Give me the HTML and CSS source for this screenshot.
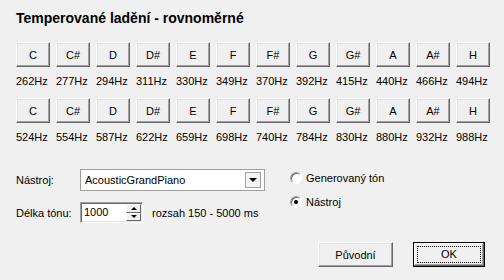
FILE: index.html
```html
<!DOCTYPE html>
<html lang="cs">

<head>
    <meta charset="UTF-8">
    <title>Temperované ladění</title>
    <link rel="stylesheet" href="styles.css">
</head>

<body>
    <div class="dialog">
        <h1 class="title">Temperované ladění - rovnoměrné</h1>

        <!-- 1. oktáva -->
        <div class="keys">
            <div class="key"><button class="btn">C</button><span>262Hz</span></div>
            <div class="key"><button class="btn">C#</button><span>277Hz</span></div>
            <div class="key"><button class="btn">D</button><span>294Hz</span></div>
            <div class="key"><button class="btn">D#</button><span>311Hz</span></div>
            <div class="key"><button class="btn">E</button><span>330Hz</span></div>
            <div class="key"><button class="btn">F</button><span>349Hz</span></div>
            <div class="key"><button class="btn">F#</button><span>370Hz</span></div>
            <div class="key"><button class="btn">G</button><span>392Hz</span></div>
            <div class="key"><button class="btn">G#</button><span>415Hz</span></div>
            <div class="key"><button class="btn">A</button><span>440Hz</span></div>
            <div class="key"><button class="btn">A#</button><span>466Hz</span></div>
            <div class="key"><button class="btn">H</button><span>494Hz</span></div>
        </div>

        <!-- 2. oktáva -->
        <div class="keys">
            <div class="key"><button class="btn">C</button><span>524Hz</span></div>
            <div class="key"><button class="btn">C#</button><span>554Hz</span></div>
            <div class="key"><button class="btn">D</button><span>587Hz</span></div>
            <div class="key"><button class="btn">D#</button><span>622Hz</span></div>
            <div class="key"><button class="btn">E</button><span>659Hz</span></div>
            <div class="key"><button class="btn">F</button><span>698Hz</span></div>
            <div class="key"><button class="btn">F#</button><span>740Hz</span></div>
            <div class="key"><button class="btn">G</button><span>784Hz</span></div>
            <div class="key"><button class="btn">G#</button><span>830Hz</span></div>
            <div class="key"><button class="btn">A</button><span>880Hz</span></div>
            <div class="key"><button class="btn">A#</button><span>932Hz</span></div>
            <div class="key"><button class="btn">H</button><span>988Hz</span></div>
        </div>

        <div class="settings">
            <div class="form">
                <div class="row">
                    <label class="lbl">Nástroj:</label>
                    <div class="combo">
                        <span class="combo-text">AcousticGrandPiano</span>
                        <span class="combo-btn"><i class="arrow-down"></i></span>
                    </div>
                </div>
                <div class="row row-spin">
                    <label class="lbl">Délka tónu:</label>
                    <div class="spin">
                        <span class="spin-text">1000</span>
                        <span class="spin-btns">
                            <span class="spin-btn"><i class="arrow-up"></i></span>
                            <span class="spin-btn"><i class="arrow-down small"></i></span>
                        </span>
                    </div>
                    <span class="hint">rozsah 150 - 5000 ms</span>
                </div>
            </div>
            <div class="radios">
                <div class="radio"><span class="circle"></span>Generovaný tón</div>
                <div class="radio"><span class="circle checked"></span>Nástroj</div>
            </div>
        </div>

        <div class="footer">
            <button class="btn btn-wide">Původní</button>
            <button class="btn btn-ok"><span class="focus">OK</span></button>
        </div>
    </div>
</body>

</html>
```

FILE: styles.css
```css
* {
    margin: 0;
    padding: 0;
    box-sizing: border-box;
}

body {
    background-color: #f0f0f0;
    font-family: "Liberation Sans", Arial, sans-serif;
    font-size: 11px;
    color: #000;
}

.dialog {
    width: 504px;
    height: 280px;
    padding: 10px 16px 0;
}

.title {
    font-size: 14px;
    font-weight: bold;
    line-height: 16px;
    height: 16px;
}

/* tlačítka tónů */
.keys {
    display: flex;
    gap: 6px;
    margin-top: 16px;
}

.keys + .keys {
    margin-top: 10px;
}

.key {
    display: flex;
    flex-direction: column;
    width: 34px;
}

.key span {
    margin-top: 7px;
    line-height: 14px;
    white-space: nowrap;
}

.btn {
    font-family: inherit;
    font-size: 11px;
    color: #000;
    width: 34px;
    height: 25px;
    background-color: #f0f0f0;
    border-style: solid;
    border-width: 1px;
    border-color: #fff #696969 #696969 #fff;
    box-shadow: inset -1px -1px 0 #a0a0a0, inset 1px 1px 0 #e3e3e3;
    cursor: pointer;
}

/* nastavení */
.settings {
    display: flex;
    margin-top: 25px;
}

.form {
    width: 274px;
}

.row {
    display: flex;
    align-items: center;
    height: 22px;
}

.row-spin {
    height: 21px;
    margin-top: 11px;
}

.lbl {
    width: 64px;
}

.combo {
    display: flex;
    align-items: center;
    width: 185px;
    height: 22px;
    background-color: #fff;
    border: 1px solid #a0a0a0;
    padding: 0 3px 0 4px;
}

.combo-text {
    flex: 1;
}

.combo-btn {
    display: flex;
    align-items: center;
    justify-content: center;
    width: 16px;
    height: 16px;
    border: 1px solid #a0a0a0;
    background-color: #f4f4f4;
}

.arrow-down {
    width: 0;
    height: 0;
    border-left: 4px solid transparent;
    border-right: 4px solid transparent;
    border-top: 4px solid #000;
}

.arrow-down.small {
    border-left-width: 3px;
    border-right-width: 3px;
    border-top-width: 3px;
}

.arrow-up {
    width: 0;
    height: 0;
    border-left: 3px solid transparent;
    border-right: 3px solid transparent;
    border-bottom: 3px solid #000;
}

.spin {
    display: flex;
    width: 63px;
    height: 21px;
    background-color: #fff;
    border-style: solid;
    border-width: 1px;
    border-color: #a0a0a0 #fff #fff #a0a0a0;
    box-shadow: inset 1px 1px 0 #696969, inset -1px -1px 0 #e3e3e3;
}

.spin-text {
    flex: 1;
    padding: 2px 0 0 3px;
    line-height: 15px;
}

.spin-btns {
    display: flex;
    flex-direction: column;
    width: 16px;
    padding: 1px 1px 1px 0;
}

.spin-btn {
    flex: 1;
    display: flex;
    align-items: center;
    justify-content: center;
    background-color: #f0f0f0;
    border-style: solid;
    border-width: 1px;
    border-color: #fff #696969 #696969 #fff;
}

.hint {
    margin-left: 9px;
}

.radios {
    display: flex;
    flex-direction: column;
    gap: 6px;
}

.radio {
    display: flex;
    align-items: center;
    height: 18px;
}

.circle {
    position: relative;
    width: 12px;
    height: 12px;
    margin-right: 4px;
    border-radius: 50%;
    background-color: #fff;
    border: 1px solid;
    border-color: #a0a0a0 #fff #fff #a0a0a0;
    box-shadow: inset 1px 1px 0 #696969;
}

.circle.checked::after {
    content: "";
    position: absolute;
    left: 3px;
    top: 3px;
    width: 4px;
    height: 4px;
    border-radius: 50%;
    background-color: #000;
}

/* spodní tlačítka */
.footer {
    display: flex;
    justify-content: flex-end;
    gap: 20px;
    margin-top: 19px;
    padding-right: 3px;
}

.btn-wide {
    width: 75px;
}

.btn-ok {
    width: 72px;
    padding: 3px;
    border-color: #000;
    box-shadow: inset -1px -1px 0 #696969, inset 1px 1px 0 #fff, inset -2px -2px 0 #a0a0a0;
}

.btn-ok .focus {
    display: block;
    height: 100%;
    border: 1px dotted #000;
    line-height: 15px;
}
```
